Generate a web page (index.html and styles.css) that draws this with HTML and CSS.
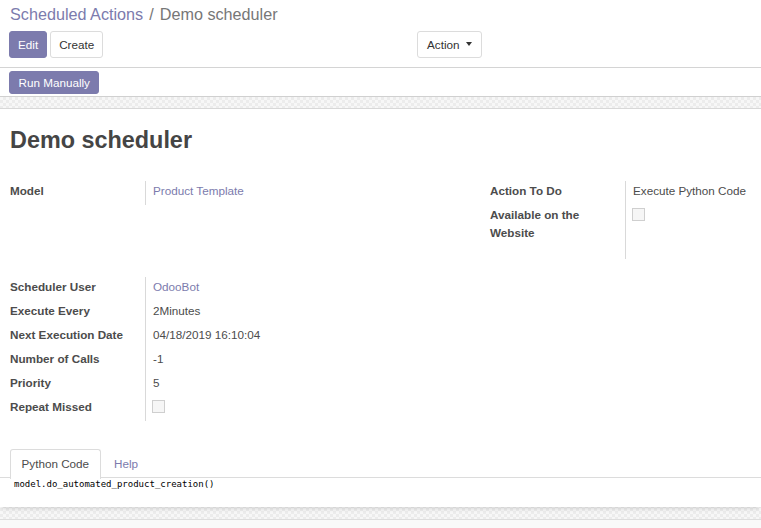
FILE: index.html
```html
<!DOCTYPE html>
<html>
<head>
<meta charset="utf-8">
<link rel="stylesheet" href="styles.css">
</head>
<body>
<div class="control-panel">
  <div class="breadcrumb"><a class="crumb-link">Scheduled Actions</a><span class="crumb-sep">/</span><span class="crumb-current">Demo scheduler</span></div>
  <div class="cp-row">
    <div class="cp-left">
      <button class="btn btn-primary">Edit</button>
      <button class="btn btn-default">Create</button>
    </div>
    <div class="cp-right">
      <button class="btn btn-default btn-action">Action <span class="caret"></span></button>
    </div>
  </div>
</div>
<div class="statusbar">
  <button class="btn btn-primary btn-sm">Run Manually</button>
</div>
<div class="sheet-bg">
  <div class="sheet">
    <h1 class="title">Demo scheduler</h1>
    <div class="group-row">
      <table class="group group-left">
        <tr><td class="label">Model</td><td class="value"><a class="link">Product Template</a></td></tr>
      </table>
      <table class="group group-right">
        <tr><td class="label">Action To Do</td><td class="value">Execute Python Code</td></tr>
        <tr><td class="label">Available on the Website</td><td class="value"><span class="checkbox"></span></td></tr>
        <tr class="spacer-row"><td class="label"></td><td class="value"></td></tr>
      </table>
    </div>
    <div class="group-row group-row-2">
      <table class="group group-left">
        <tr><td class="label">Scheduler User</td><td class="value"><a class="link">OdooBot</a></td></tr>
        <tr><td class="label">Execute Every</td><td class="value">2Minutes</td></tr>
        <tr><td class="label">Next Execution Date</td><td class="value">04/18/2019 16:10:04</td></tr>
        <tr><td class="label">Number of Calls</td><td class="value">-1</td></tr>
        <tr><td class="label">Priority</td><td class="value">5</td></tr>
        <tr><td class="label">Repeat Missed</td><td class="value"><span class="checkbox"></span></td></tr>
      </table>
    </div>
    <div class="notebook">
      <ul class="tabs">
        <li class="tab active">Python Code</li>
        <li class="tab">Help</li>
      </ul>
      <div class="code">model.do_automated_product_creation()</div>
    </div>
  </div>
</div>
<div class="chatter"></div>
</body>
</html>
```

FILE: styles.css
```css
html, body {
  margin: 0;
  padding: 0;
  background: #fff;
}
body {
  font-family: "Liberation Sans", Arial, sans-serif;
  font-size: 11.7px;
  color: #4c4c4c;
  width: 761px;
  height: 528px;
  overflow: hidden;
}
.control-panel {
  padding: 2px 0 9px 0;
  border-bottom: 1px solid #d4d4d4;
}
.breadcrumb {
  padding-left: 10px;
  font-size: 16.2px;
  line-height: 24px;
  height: 24px;
  color: #777;
}
.crumb-link {
  color: #7C7BAD;
}
.crumb-sep {
  margin: 0 6px;
  color: #777;
}
.cp-row {
  margin-top: 5px;
  display: grid;
  grid-template-columns: 380px 1fr;
  height: 27px;
}
.cp-left {
  padding-left: 9px;
  display: flex;
  gap: 3px;
}
.cp-right {
  padding-left: 37px;
  display: flex;
}
.btn {
  font-family: "Liberation Sans", Arial, sans-serif;
  font-size: 11.7px;
  height: 27px;
  padding: 0 8px;
  border-radius: 3px;
  border: 1px solid transparent;
  cursor: pointer;
  line-height: 25px;
}
.btn-primary {
  background: #7C7BAD;
  border-color: #7C7BAD;
  color: #fff;
}
.btn-default {
  background: #fff;
  border-color: #dcdcdc;
  color: #333;
}
.btn-action {
  padding: 0 9px;
  display: flex;
  align-items: center;
  gap: 7px;
}
.caret {
  width: 0;
  height: 0;
  border-left: 3px solid transparent;
  border-right: 3px solid transparent;
  border-top: 4px solid #333;
  margin-top: -2px;
}
.statusbar {
  height: 29px;
  padding: 3px 0 0 9px;
  box-sizing: border-box;
  border-bottom: 1px solid #d0d0d0;
}
.btn-sm {
  height: 23px;
  line-height: 21px;
  padding: 0 8.5px;
}
.sheet-bg {
  padding: 11px 0 12px 0;
  background-color: #f4f4f4;
  background-image: conic-gradient(#ececec 25%, #f7f7f7 0 50%, #ececec 0 75%, #f7f7f7 0);
  background-size: 6px 6px;
  border-bottom: 1px solid #dedede;
}
.sheet {
  background: #fff;
  border-top: 1px solid #d8d8d8;
  box-shadow: 0 4px 4px -2px rgba(0,0,0,0.12);
  padding: 16px 0 0 10px;
  height: 399px;
  box-sizing: border-box;
}
.title {
  margin: 0;
  font-size: 23.4px;
  line-height: 31px;
  font-weight: bold;
  color: #454545;
}
.group-row {
  margin-top: 25px;
  display: flex;
  align-items: flex-start;
}
.group-row-2 {
  margin-top: 18px;
}
.group {
  border-collapse: collapse;
}
.group-left {
  width: 480px;
}
.group-right {
  width: 271px;
}
.label {
  width: 135px;
  padding: 1px 0 5.5px 0;
  vertical-align: top;
  font-weight: bold;
  line-height: 17.5px;
  color: #4c4c4c;
}
.value {
  border-left: 1px solid #d9d9d9;
  padding: 1px 0 5.5px 7px;
  vertical-align: top;
  line-height: 17.5px;
  white-space: nowrap;
}
.spacer-row td {
  height: 12.5px;
  padding: 0;
}
.link {
  color: #7C7BAD;
}
.checkbox {
  display: inline-block;
  width: 11px;
  height: 11px;
  border: 1px solid #cfcfcf;
  background: #f6f6f6;
  margin-left: -1px;
  margin-top: 2px;
  vertical-align: top;
}
.notebook {
  margin-top: 28px;
  margin-left: -10px;
}
.tabs {
  list-style: none;
  margin: 0;
  padding: 0 0 0 10px;
  display: flex;
  border-bottom: 1px solid #dcdcdc;
  height: 28px;
}
.tab {
  padding: 0 10.5px;
  line-height: 28px;
  margin-right: 2px;
  color: #7C7BAD;
  border: 1px solid transparent;
  border-bottom: none;
  border-radius: 3px 3px 0 0;
}
.tab.active {
  color: #4c4c4c;
  background: #fff;
  border-color: #dcdcdc;
  height: 29px;
}
.code {
  font-family: "DejaVu Sans Mono", monospace;
  font-size: 9px;
  line-height: 12px;
  padding-left: 14px;
  color: #000;
}
.chatter {
  background: #f9f9f9;
  height: 20px;
}
```
